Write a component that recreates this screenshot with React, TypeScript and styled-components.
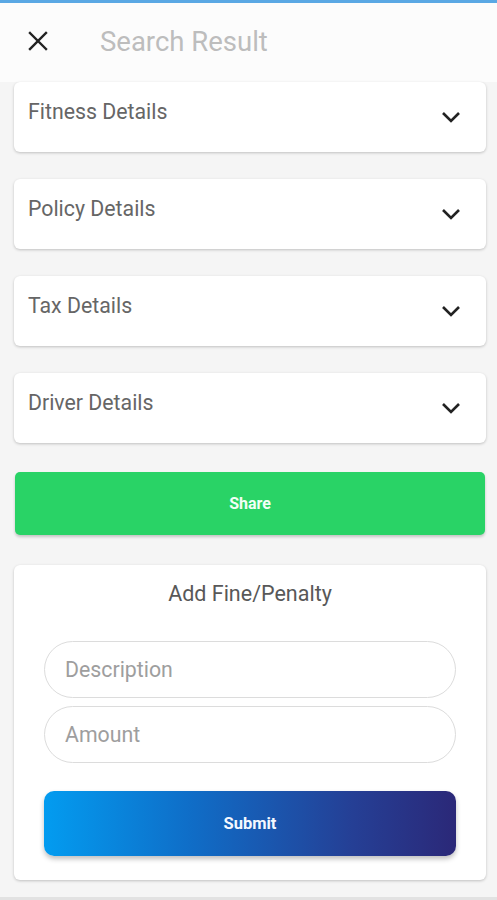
import React from "react";
import styled, { createGlobalStyle } from "styled-components";

const GlobalStyle = createGlobalStyle`
  body {
    margin: 0;
    background: #f5f5f5;
    font-family: Roboto, "Noto Sans", sans-serif;
  }
`;

const sections = ["Fitness Details", "Policy Details", "Tax Details", "Driver Details"];

const Page = styled.div`
  display: flex;
  flex-direction: column;
  min-height: 900px;
  border-top: 3px solid #5aa8e4;
  box-sizing: border-box;
`;

const Header = styled.header`
  display: flex;
  align-items: center;
  height: 79px;
  padding: 0 0 0 28px;
  box-sizing: border-box;
  background: #fcfcfc;
`;

const CloseButton = styled.button`
  display: flex;
  align-items: center;
  justify-content: center;
  width: 20px;
  height: 20px;
  padding: 0;
  border: none;
  background: none;
  margin-top: -4px;
`;

const Title = styled.h1`
  margin: -2px 0 0 52px;
  font-size: 27.5px;
  font-weight: 400;
  color: #bdbdbd;
`;

const Content = styled.main`
  display: flex;
  flex-direction: column;
  padding: 0 11px 0 14px;
`;

const Section = styled.div`
  display: flex;
  justify-content: space-between;
  height: 70px;
  box-sizing: border-box;
  padding: 17px 25px 0 14px;
  margin-bottom: 27px;
  background: #fff;
  border-radius: 6px;
  box-shadow: 0 1px 3px rgba(0, 0, 0, 0.22);
`;

const SectionLabel = styled.span`
  font-size: 21.3px;
  line-height: 26px;
  color: #666;
`;

const Chevron = styled.svg`
  margin-top: 12px;
`;

const Share = styled.button`
  height: 63px;
  margin: 2px 1px 30px 1px;
  border: none;
  border-radius: 5px;
  background: #29d366;
  color: #f2fff6;
  font-family: Roboto, sans-serif;
  font-size: 16px;
  font-weight: 700;
  box-shadow: 0 2px 3px rgba(0, 0, 0, 0.2);
`;

const FormCard = styled.form`
  display: flex;
  flex-direction: column;
  padding: 17px 30px 24px 30px;
  background: #fff;
  border-radius: 6px;
  box-shadow: 0 1px 3px rgba(0, 0, 0, 0.22);
`;

const FormTitle = styled.h2`
  margin: 0 0 35px;
  text-align: center;
  font-size: 21.5px;
  line-height: 24px;
  font-weight: 400;
  color: #585858;
`;

const Field = styled.input`
  height: 57px;
  box-sizing: border-box;
  margin-bottom: 8px;
  padding: 0 20px;
  border: 1px solid #dcdcdc;
  border-radius: 29px;
  font-family: Roboto, sans-serif;
  font-size: 21.3px;
  color: #333;
  outline: none;

  &::placeholder {
    color: #9e9e9e;
  }
`;

const Submit = styled.button`
  height: 65px;
  margin-top: 20px;
  border: none;
  border-radius: 10px;
  background: linear-gradient(90deg, #039cf0 0%, #0f6ec8 35%, #253f95 75%, #2b2878 100%);
  color: #f4f8ff;
  font-family: Roboto, sans-serif;
  font-size: 16.5px;
  font-weight: 700;
  box-shadow: 0 3px 5px rgba(0, 0, 0, 0.25);
`;

const BottomBar = styled.div`
  margin-top: auto;
  height: 3px;
  background: #e2e2e2;
`;

const App = () => {
  return (
    <>
      <GlobalStyle />
      <Page>
        <Header>
          <CloseButton aria-label="close">
            <svg width="20" height="20" viewBox="0 0 20 20">
              <path d="M2 2 L18 18 M18 2 L2 18" stroke="#222" strokeWidth="2.4" strokeLinecap="square" />
            </svg>
          </CloseButton>
          <Title>Search Result</Title>
        </Header>
        <Content>
          {sections.map((name) => (
            <Section key={name}>
              <SectionLabel>{name}</SectionLabel>
              <Chevron width="20" height="12" viewBox="0 0 20 12">
                <path d="M2 2 L10 10 L18 2" fill="none" stroke="#222" strokeWidth="2.6" />
              </Chevron>
            </Section>
          ))}
          <Share type="button">Share</Share>
          <FormCard onSubmit={(e) => e.preventDefault()}>
            <FormTitle>Add Fine/Penalty</FormTitle>
            <Field placeholder="Description" />
            <Field placeholder="Amount" />
            <Submit type="submit">Submit</Submit>
          </FormCard>
        </Content>
        <BottomBar />
      </Page>
    </>
  );
};

export default App;
